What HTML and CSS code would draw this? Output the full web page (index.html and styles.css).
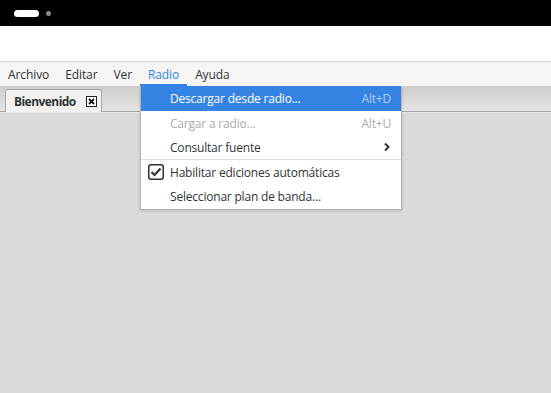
FILE: index.html
```html
<!DOCTYPE html>
<html>
<head>
<meta charset="utf-8">
<link rel="stylesheet" href="styles.css">
</head>
<body>
<div class="topbar">
  <span class="pill"></span>
  <span class="dot"></span>
</div>
<div class="whitebar"></div>
<div class="menubar">
  <span class="mi">Archivo</span>
  <span class="mi">Editar</span>
  <span class="mi">Ver</span>
  <span class="mi active">Radio</span>
  <span class="mi">Ayuda</span>
</div>
<div class="tabstrip">
  <div class="tab">
    <span class="tablabel">Bienvenido</span>
    <span class="tabclose"><svg width="11" height="11" viewBox="0 0 11 11"><rect x="0.5" y="0.5" width="10" height="10" fill="#fff" stroke="#222"/><path d="M3 3 L8 8 M8 3 L3 8" stroke="#111" stroke-width="1.8"/></svg></span>
  </div>
</div>
<div class="main"></div>

<div class="menu">
  <div class="item sel"><span class="lbl">Descargar desde radio...</span><span class="acc">Alt+D</span></div>
  <div class="item dis"><span class="lbl">Cargar a radio...</span><span class="acc">Alt+U</span></div>
  <div class="item"><span class="lbl">Consultar fuente</span><svg class="arrow" width="8" height="10" viewBox="0 0 8 10"><path d="M2 1.5 L5.5 5 L2 8.5" fill="none" stroke="#2e3436" stroke-width="2"/></svg></div>
  <div class="sep"></div>
  <div class="item"><span class="check"><svg width="16" height="16" viewBox="0 0 16 16"><rect x="0.75" y="0.75" width="14.5" height="14.5" rx="2.5" fill="#fff" stroke="#2e3436" stroke-width="1.5"/><path d="M3.5 8 L6.5 11 L12.5 4.5" fill="none" stroke="#2e3436" stroke-width="2.2"/></svg></span><span class="lbl">Habilitar ediciones automáticas</span></div>
  <div class="item"><span class="lbl">Seleccionar plan de banda...</span></div>
</div>
</body>
</html>
```

FILE: styles.css
```css
* { box-sizing: border-box; }
html, body { margin: 0; padding: 0; }
body {
  width: 551px;
  height: 393px;
  overflow: hidden;
  font-family: "Open Sans", "Noto Sans", sans-serif;
  font-size: 12px;
  color: #2e3436;
  background: #dcdad7;
  position: relative;
}
.topbar {
  height: 26px;
  background: #000;
  display: flex;
  align-items: center;
  padding-left: 14px;
  gap: 7px;
}
.pill {
  width: 25px;
  height: 7px;
  border-radius: 4px;
  background: #fff;
}
.dot {
  width: 5px;
  height: 5px;
  border-radius: 50%;
  background: #8a8a8a;
}
.whitebar {
  height: 36px;
  background: #fff;
  border-bottom: 1px solid #d8d6d3;
}
.menubar {
  height: 24px;
  background: #f6f5f4;
  display: flex;
  align-items: stretch;
  padding-left: 0;
}
.mi {
  padding: 2px 8px 0;
  display: flex;
  align-items: center;
  border-bottom: 2px solid transparent;
  letter-spacing: -0.1px;
}
.mi.active {
  color: #3584e4;
  border-bottom-color: #3584e4;
}
.tabstrip {
  height: 26px;
  background: linear-gradient(#cfcdca, #e6e5e3);
  border-bottom: 1px solid #a8a7a5;
  box-shadow: 0 1px 0 #ecebea;
  padding-left: 5px;
  display: flex;
  align-items: flex-end;
}
.tab {
  width: 97px;
  height: 23px;
  margin-bottom: -1px;
  background: #f3f2f1;
  border: 1px solid #a8a7a5;
  border-bottom: none;
  border-radius: 3px 3px 0 0;
  display: flex;
  align-items: center;
  padding-left: 8px;
  padding-right: 4px;
}
.tablabel {
  font-weight: bold;
  color: #2e3436;
  letter-spacing: -0.55px;
  flex: 1;
}
.tabclose { display: flex; }
.main { height: 280px; }

.menu {
  position: absolute;
  left: 140px;
  top: 86px;
  width: 262px;
  background: #fff;
  border: 1px solid #b5b3b0;
  border-top: none;
  box-shadow: 0 1px 3px rgba(0,0,0,0.15);
  padding-bottom: 1px;
  letter-spacing: -0.2px;
}
.item {
  height: 24px;
  display: flex;
  align-items: center;
  padding-left: 29px;
  padding-right: 10px;
  position: relative;
}
.item:first-child { height: 25px; }
.item .lbl { flex: 1; }
.item .acc { color: #a9abab; }
.item.sel { background: #3584e4; color: #fff; }
.item.sel .acc { color: #a8c8f0; }
.item.dis { color: #a9abab; }
.sep {
  height: 1px;
  background: #e0dfdd;
}
.check {
  position: absolute;
  left: 7px;
  top: 4px;
  display: flex;
}
```
